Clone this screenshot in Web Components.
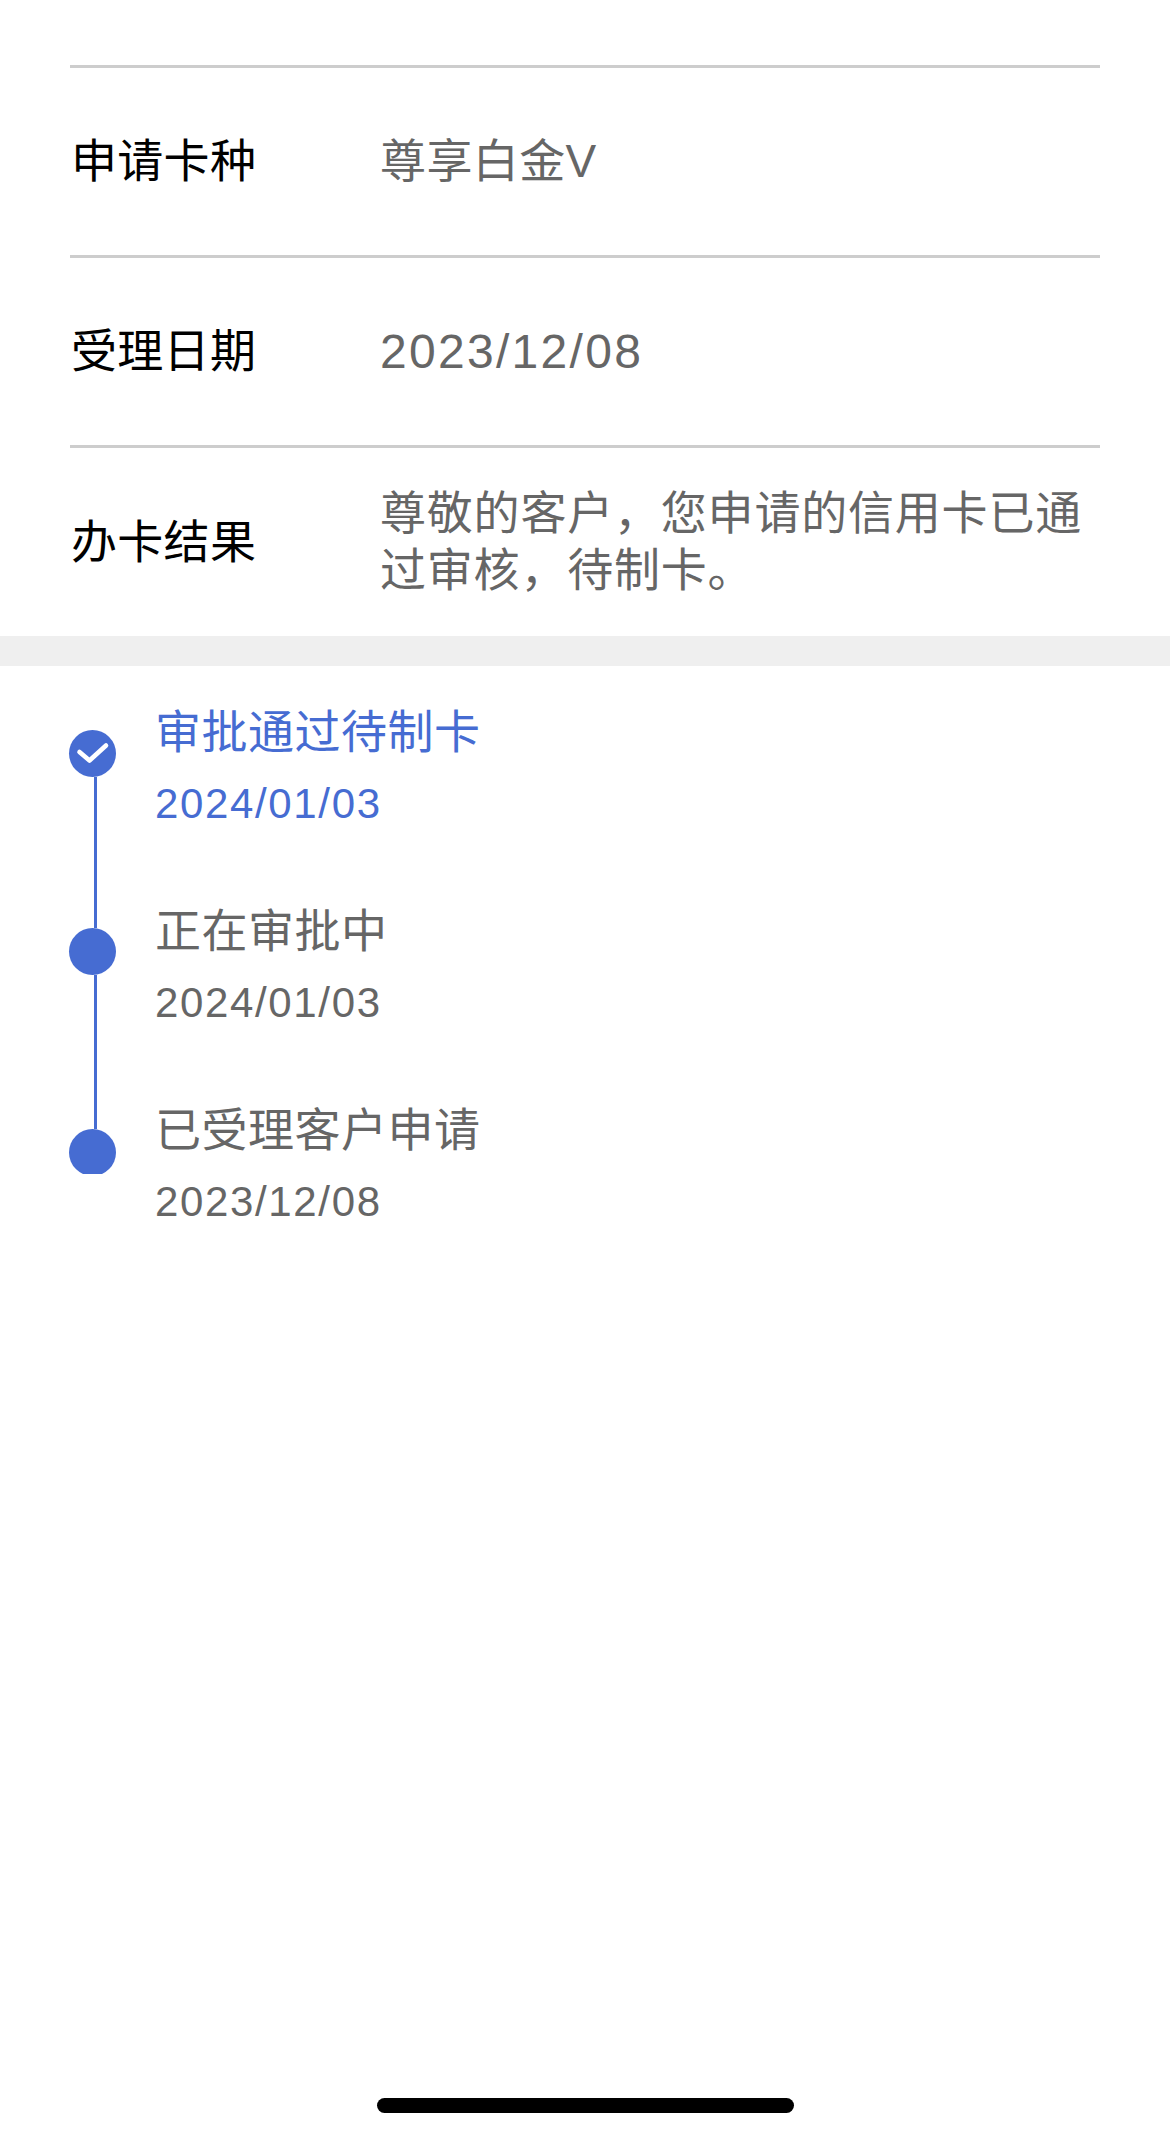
<!DOCTYPE html>
<html lang="zh">
<head>
<meta charset="utf-8">
<title>办卡进度</title>
<style>
  html, body { margin: 0; background: #fff; }
  body {
    height: 2137px;
    overflow: hidden;
    font-family: "Liberation Sans", "Noto Sans CJK SC", sans-serif;
  }
</style>
</head>
<body>
<progress-page>
  <info-list>
    <info-row label="申请卡种">尊享白金V</info-row>
    <info-row label="受理日期" numeric>2023/12/08</info-row>
    <info-row label="办卡结果" tall>尊敬的客户&#xFF0C;您申请的信用卡已通过审核&#xFF0C;待制卡。</info-row>
  </info-list>
  <step-list>
    <step-item heading="审批通过待制卡" date="2024/01/03" active dot-top="28" next-top="27"></step-item>
    <step-item heading="正在审批中" date="2024/01/03" dot-top="27" next-top="29"></step-item>
    <step-item heading="已受理客户申请" date="2023/12/08" dot-top="29" last></step-item>
  </step-list>
  <home-bar></home-bar>
</progress-page>

<script>
class ProgressPage extends HTMLElement {
  connectedCallback() {
    this.attachShadow({ mode: 'open' });
    this.shadowRoot.innerHTML = `
      <style>
        :host {
          display: flex;
          flex-direction: column;
          height: 2137px;
          background: #fff;
        }
      </style>
      <slot></slot>
    `;
  }
}

class InfoList extends HTMLElement {
  connectedCallback() {
    this.attachShadow({ mode: 'open' });
    this.shadowRoot.innerHTML = `
      <style>
        :host {
          display: block;
          padding: 65px 70px 0;
          border-bottom: 30px solid #efefef;
        }
      </style>
      <slot></slot>
    `;
  }
}

class InfoRow extends HTMLElement {
  connectedCallback() {
    this.attachShadow({ mode: 'open' });
    this.shadowRoot.innerHTML = `
      <style>
        :host {
          display: grid;
          grid-template-columns: 310px 1fr;
          align-items: center;
          height: 187px;
          border-top: 3px solid #cdcdcd;
          font-size: 46px;
          line-height: 57px;
        }
        :host([tall]) { height: 188px; }
        .label {
          color: #000;
          padding-left: 1px;
          letter-spacing: 0.3px;
        }
        .value {
          color: #666;
          letter-spacing: 0.4px;
        }
        :host([tall]) .value { letter-spacing: 0.8px; }
        :host([numeric]) .value {
          font-size: 48px;
          letter-spacing: 2.3px;
        }
      </style>
      <div class="label">${this.getAttribute('label')}</div>
      <div class="value"><slot></slot></div>
    `;
  }
}

class StepList extends HTMLElement {
  connectedCallback() {
    this.attachShadow({ mode: 'open' });
    this.shadowRoot.innerHTML = `
      <style>
        :host {
          display: block;
          padding: 36px 0 0 69px;
        }
      </style>
      <slot></slot>
    `;
  }
}

class StepItem extends HTMLElement {
  connectedCallback() {
    const active = this.hasAttribute('active');
    const last = this.hasAttribute('last');
    const top = this.getAttribute('dot-top');
    const next = this.getAttribute('next-top') || 0;
    const check = active
      ? '<svg viewBox="0 0 47 47" width="47" height="47"><path d="M10.5 22l10 8.5L37 15.5" fill="none" stroke="#fff" stroke-width="4.6" stroke-linecap="round" stroke-linejoin="round"/></svg>'
      : '';
    this.attachShadow({ mode: 'open' });
    this.shadowRoot.innerHTML = `
      <style>
        :host {
          display: grid;
          grid-template-columns: 86px 1fr;
          height: 199px;
          color: #666;
        }
        :host([active]) { color: #466cd2; }
        .marker {
          display: flex;
          flex-direction: column;
          margin-top: ${top}px;
          margin-bottom: -${next}px;
          ${last ? 'height: 45px; margin-bottom: 0; overflow: hidden;' : ''}
        }
        .dot {
          flex: none;
          width: 47px;
          height: 47px;
          border-radius: 50%;
          background: #466cd2;
        }
        .dot svg { display: block; }
        .line {
          flex: 1;
          width: 3px;
          margin-left: 25px;
          background: #466cd2;
        }
        .heading {
          font-size: 46px;
          line-height: 60px;
          letter-spacing: 0.5px;
        }
        .date {
          margin-top: 12px;
          font-size: 42px;
          line-height: 60px;
          letter-spacing: 1.65px;
        }
      </style>
      <div class="marker">
        <div class="dot">${check}</div>
        ${last ? '' : '<div class="line"></div>'}
      </div>
      <div class="text">
        <div class="heading">${this.getAttribute('heading')}</div>
        <div class="date">${this.getAttribute('date')}</div>
      </div>
    `;
  }
}

class HomeBar extends HTMLElement {
  connectedCallback() {
    this.attachShadow({ mode: 'open' });
    this.shadowRoot.innerHTML = `
      <style>
        :host {
          display: block;
          width: 417px;
          height: 15px;
          margin: auto auto 24px 377px;
          border-radius: 8px;
          background: #000;
        }
      </style>
    `;
  }
}

customElements.define('progress-page', ProgressPage);
customElements.define('info-list', InfoList);
customElements.define('info-row', InfoRow);
customElements.define('step-list', StepList);
customElements.define('step-item', StepItem);
customElements.define('home-bar', HomeBar);
</script>
</body>
</html>
